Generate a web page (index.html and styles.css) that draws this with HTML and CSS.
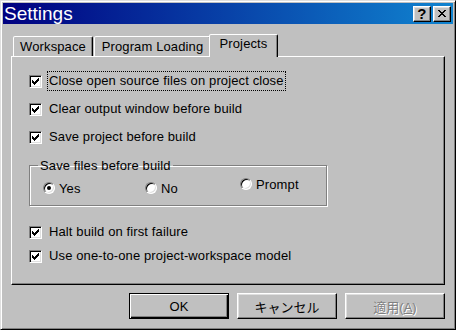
FILE: index.html
```html
<!DOCTYPE html>
<html lang="ja">

<head>
    <meta charset="UTF-8">
    <title>Settings</title>
    <link rel="stylesheet" href="styles.css">
</head>

<body>
    <div class="window">
        <div class="titlebar">
            <span class="title">Settings</span>
            <div class="caption-buttons">
                <span class="cap-btn cap-help">?</span>
                <span class="cap-btn cap-close">
                    <svg width="8" height="7" viewBox="0 0 8 7" shape-rendering="crispEdges">
                        <path d="M0 0h2v1h1v1h2v-1h1v-1h2v1h-1v1h-1v1h-1v1h1v1h1v1h1v1h-2v-1h-1v-1h-2v1h-1v1h-2v-1h1v-1h1v-1h1v-1h-1v-1h-1v-1h-1z" fill="#000"/>
                    </svg>
                </span>
            </div>
        </div>

        <div class="content">
            <div class="tabs">
                <div class="tab tab-workspace">Workspace</div>
                <div class="tab tab-loading">Program Loading</div>
                <div class="tab tab-projects active">Projects</div>
            </div>

            <div class="panel">
                <label class="check-row">
                    <span class="checkbox"><svg width="7" height="7" viewBox="0 0 7 7" shape-rendering="crispEdges"><path d="M0 2h1v3H0zM1 3h1v3H1zM2 4h1v3H2zM3 3h1v3H3zM4 2h1v3H4zM5 1h1v3H5zM6 0h1v3H6z" fill="#000"/></svg></span>
                    <span class="check-label focused">Close open source files on project close</span>
                </label>
                <label class="check-row">
                    <span class="checkbox"><svg width="7" height="7" viewBox="0 0 7 7" shape-rendering="crispEdges"><path d="M0 2h1v3H0zM1 3h1v3H1zM2 4h1v3H2zM3 3h1v3H3zM4 2h1v3H4zM5 1h1v3H5zM6 0h1v3H6z" fill="#000"/></svg></span>
                    <span class="check-label">Clear output window before build</span>
                </label>
                <label class="check-row">
                    <span class="checkbox"><svg width="7" height="7" viewBox="0 0 7 7" shape-rendering="crispEdges"><path d="M0 2h1v3H0zM1 3h1v3H1zM2 4h1v3H2zM3 3h1v3H3zM4 2h1v3H4zM5 1h1v3H5zM6 0h1v3H6z" fill="#000"/></svg></span>
                    <span class="check-label">Save project before build</span>
                </label>

                <fieldset class="group">
                    <legend>Save files before build</legend>
                    <div class="radios">
                        <span class="radio-item radio-yes"><span class="radio checked"></span>Yes</span>
                        <span class="radio-item radio-no"><span class="radio"></span>No</span>
                        <span class="radio-item radio-prompt"><span class="radio"></span>Prompt</span>
                    </div>
                </fieldset>

                <label class="check-row check-halt">
                    <span class="checkbox"><svg width="7" height="7" viewBox="0 0 7 7" shape-rendering="crispEdges"><path d="M0 2h1v3H0zM1 3h1v3H1zM2 4h1v3H2zM3 3h1v3H3zM4 2h1v3H4zM5 1h1v3H5zM6 0h1v3H6z" fill="#000"/></svg></span>
                    <span class="check-label">Halt build on first failure</span>
                </label>
                <label class="check-row check-model">
                    <span class="checkbox"><svg width="7" height="7" viewBox="0 0 7 7" shape-rendering="crispEdges"><path d="M0 2h1v3H0zM1 3h1v3H1zM2 4h1v3H2zM3 3h1v3H3zM4 2h1v3H4zM5 1h1v3H5zM6 0h1v3H6z" fill="#000"/></svg></span>
                    <span class="check-label">Use one-to-one project-workspace model</span>
                </label>
            </div>

            <div class="buttons">
                <button class="btn btn-default">OK</button>
                <button class="btn">キャンセル</button>
                <button class="btn btn-disabled">適用(<u>A</u>)</button>
            </div>
        </div>
    </div>
</body>

</html>
```

FILE: styles.css
```css
:root {
    --face: #c0c0c0;
    --light: #dfdfdf;
    --shadow: #808080;
    --dark: #000;
}

* {
    box-sizing: border-box;
}

body {
    margin: 0;
    font-family: "Liberation Sans", "Noto Sans CJK JP", sans-serif;
    font-size: 13px;
    letter-spacing: 0.12px;
    color: #000;
}

.window {
    width: 456px;
    height: 330px;
    padding: 2px;
    background-color: var(--face);
    border: 1px solid;
    border-color: var(--light) var(--dark) var(--dark) var(--light);
    box-shadow: inset 1px 1px #fff, inset -1px -1px var(--shadow);
}

/* タイトルバー */
.titlebar {
    height: 21px;
    display: flex;
    align-items: center;
    justify-content: space-between;
    padding: 0 2px 0 1px;
    background: linear-gradient(to right, #000080, #1084d0);
}

.title {
    color: #fff;
    font-size: 19px;
    letter-spacing: 0;
    line-height: 21px;
}

.caption-buttons {
    display: flex;
    gap: 2px;
}

.cap-btn {
    width: 18px;
    height: 16px;
    display: flex;
    justify-content: center;
    align-items: center;
    background-color: var(--face);
    border: 1px solid;
    border-color: #fff var(--dark) var(--dark) #fff;
    box-shadow: inset -1px -1px var(--shadow), inset 1px 1px var(--light);
}

.cap-help {
    font-weight: bold;
    font-size: 15px;
    line-height: 14px;
}

/* タブ */
.content {
    padding: 10px 8px 0;
}

.tabs {
    height: 22px;
    display: flex;
    align-items: flex-end;
    padding-left: 2px;
}

.tab {
    height: 20px;
    padding: 2px 0 0;
    text-align: center;
    line-height: 16px;
    background-color: var(--face);
    border: 1px solid;
    border-bottom: none;
    border-color: #fff var(--dark) transparent #fff;
    border-radius: 2px 2px 0 0;
    box-shadow: inset -1px 0 var(--shadow);
}

.tab-workspace {
    width: 80px;
    margin-right: 1px;
}

.tab-loading {
    width: 117px;
}

.tab.active {
    position: relative;
    z-index: 1;
    width: 69px;
    height: 23px;
    margin: 0 -2px -1px;
    padding-top: 1px;
}

/* パネル */
.panel {
    height: 229px;
    padding: 14px 0 0 17px;
    border: 1px solid;
    border-color: #fff var(--dark) var(--dark) #fff;
    box-shadow: inset -1px -1px var(--shadow);
}

.check-row {
    height: 20px;
    display: flex;
    align-items: center;
    margin-bottom: 8px;
}

.checkbox {
    width: 13px;
    height: 13px;
    display: flex;
    padding: 2px;
    background-color: #fff;
    border: 1px solid;
    border-color: var(--shadow) #fff #fff var(--shadow);
    box-shadow: inset 1px 1px var(--dark), inset -1px -1px var(--light);
}

.checkbox svg {
    display: block;
}

.check-label {
    margin-left: 5px;
    padding: 1px 1px 2px;
    border: 1px dotted transparent;
}

.check-label.focused {
    border-color: var(--dark);
}

/* グループボックス */
.group {
    width: 298px;
    height: 48px;
    margin: 11px 0 0;
    padding: 0 0 0 8px;
    border: 1px solid var(--shadow);
    box-shadow: 1px 1px #fff, inset 1px 1px #fff;
}

.group legend {
    padding: 0 2px;
    line-height: 15px;
}

.radios {
    display: flex;
    align-items: flex-start;
    padding: 7px 0 0 5px;
}

.radio-item {
    display: flex;
    align-items: center;
    height: 16px;
}

.radio-yes {
    width: 102px;
}

.radio-no {
    width: 95px;
}

.radio-prompt {
    margin-top: -4px;
}

.radio {
    width: 12px;
    height: 12px;
    margin-right: 4px;
    display: flex;
    justify-content: center;
    align-items: center;
    border-radius: 50%;
    background-color: #fff;
    border: 1px solid;
    border-color: var(--shadow) #fff #fff var(--shadow);
    box-shadow: inset 1px 1px var(--dark), inset -1px -1px var(--light);
}

.radio.checked::after {
    content: "";
    width: 4px;
    height: 4px;
    border-radius: 50%;
    background-color: #000;
}

.check-halt {
    margin-top: 16px;
    margin-bottom: 4px;
}

/* ボタン */
.buttons {
    display: flex;
    justify-content: flex-end;
    gap: 8px;
    margin-top: 8px;
}

.btn {
    width: 100px;
    height: 26px;
    padding: 0;
    font-family: "Liberation Sans", "Noto Sans CJK JP", sans-serif;
    font-size: 13px;
    color: #000;
    background-color: var(--face);
    border: 1px solid;
    border-color: #fff var(--dark) var(--dark) #fff;
    box-shadow: inset -1px -1px var(--shadow), inset 1px 1px var(--light);
}

.btn-default {
    border-color: var(--dark);
    box-shadow: inset 1px 1px #fff, inset -1px -1px var(--dark), inset -2px -2px var(--shadow);
}

.btn-disabled {
    color: var(--shadow);
    text-shadow: 1px 1px #fff;
}
```
